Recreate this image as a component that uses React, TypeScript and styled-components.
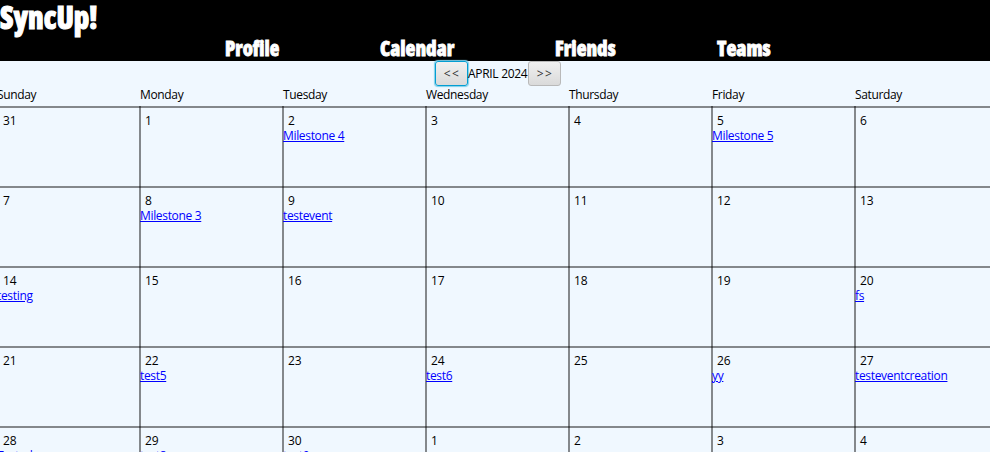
import React from "react";
import styled, { createGlobalStyle } from "styled-components";

const GlobalStyle = createGlobalStyle`
  * { box-sizing: border-box; }
  html, body { margin: 0; height: 100%; overflow: hidden; background: #f0f8ff; }
  body { font: 12px/16px "Open Sans", "Noto Sans", sans-serif; color: #000; }
`;

const Page = styled.div`
  width: 990px;
  height: 452px;
  overflow: hidden;
  background: #f0f8ff;
`;

const Header = styled.header`
  height: 61px;
  background: #000;
  color: #fff;
  font-family: Impact, "Open Sans", sans-serif;
  font-weight: 800;
  font-stretch: 75%;
`;

const Brand = styled.div`
  height: 37px;
  font-size: 32px;
  line-height: 34px;
  white-space: nowrap;
`;

const Nav = styled.nav`
  display: flex;
  padding-left: 225px;
  font-size: 21px;
  line-height: 22px;
`;

const NavItem = styled.a<{ $advance: number }>`
  flex: 0 0 ${(p) => p.$advance}px;
  white-space: nowrap;
`;

const Condensed = styled.span<{ $x: number; $stroke?: number }>`
  display: inline-block;
  transform: scaleX(${(p) => p.$x});
  transform-origin: 0 50%;
  -webkit-text-stroke: ${(p) => p.$stroke ?? 0.8}px #fff;
`;

const MonthBar = styled.div`
  display: flex;
  height: 25px;
  padding-left: 435px;
  align-items: center;
`;

const MonthName = styled.span`
  flex: 0 0 60px;
  white-space: nowrap;
  letter-spacing: -0.3px;
`;

const StepButton = styled.button<{ $focused?: boolean }>`
  width: 33px;
  height: 25px;
  padding: 1px 0 0 1px;
  font: inherit;
  letter-spacing: 1.5px;
  color: #333;
  border: 1px solid ${(p) => (p.$focused ? "#039ed3" : "#b9b9b9")};
  border-radius: 3px;
  background: linear-gradient(#f0f0f0, #dadada);
  box-shadow: ${(p) => (p.$focused ? "0 0 1px 1px #7fd0ea" : "none")};
`;

const Weekdays = styled.div`
  display: grid;
  grid-template-columns: repeat(7, 143px);
  margin-left: -3px;
  height: 20px;
  line-height: 18px;
  letter-spacing: -0.35px;
`;

const Grid = styled.div`
  display: grid;
  grid-template-columns: repeat(7, 143px);
  grid-auto-rows: 80px;
  margin-left: -4px;
  width: 1001px;
`;

const Cell = styled.div`
  padding: 7px 0 0 1px;
  background:
    linear-gradient(rgba(0, 0, 0, 0.45), rgba(0, 0, 0, 0.45)) 0 0 / 2px 100% no-repeat,
    linear-gradient(rgba(0, 0, 0, 0.45), rgba(0, 0, 0, 0.45)) 0 0 / 100% 2px no-repeat;
`;

const DayNumber = styled.div<{ $first: boolean }>`
  padding-left: ${(p) => (p.$first ? 6 : 5)}px;
  height: 15px;
`;

const EventLink = styled.a`
  display: block;
  width: max-content;
  color: #0000ff;
  text-decoration: underline;
  white-space: nowrap;
  letter-spacing: -0.33px;
`;

const weekdays = ["Sunday", "Monday", "Tuesday", "Wednesday", "Thursday", "Friday", "Saturday"];
const days = [31, ...Array.from({ length: 30 }, (_, i) => i + 1), 1, 2, 3, 4];
const events: Record<number, string> = {
  2: "Milestone 4", 5: "Milestone 5", 8: "Milestone 3", 9: "testevent", 14: "testing",
  20: "fs", 22: "test5", 24: "test6", 26: "yy", 27: "testeventcreation",
  28: "Tested", 29: "test8", 30: "test9",
};

export default function App() {
  return (
    <Page>
      <GlobalStyle />
      <Header>
        <Brand><Condensed $x={0.925} $stroke={1.1}>SyncUp!</Condensed></Brand>
        <Nav>
          <NavItem $advance={155}><Condensed $x={0.94}>Profile</Condensed></NavItem>
          <NavItem $advance={175}><Condensed $x={0.965}>Calendar</Condensed></NavItem>
          <NavItem $advance={162}><Condensed $x={0.96}>Friends</Condensed></NavItem>
          <NavItem $advance={60}><Condensed $x={0.975}>Teams</Condensed></NavItem>
        </Nav>
      </Header>
      <MonthBar>
        <StepButton $focused>&lt;&lt;</StepButton>
        <MonthName>APRIL 2024</MonthName>
        <StepButton>&gt;&gt;</StepButton>
      </MonthBar>
      <Weekdays>
        {weekdays.map((d) => <span key={d}>{d}</span>)}
      </Weekdays>
      <Grid>
        {days.map((d, i) => (
          <Cell key={i}>
            <DayNumber $first={i % 7 === 0}>{d}</DayNumber>
            {i > 0 && i < 31 && events[d] && <EventLink>{events[d]}</EventLink>}
          </Cell>
        ))}
      </Grid>
    </Page>
  );
}
